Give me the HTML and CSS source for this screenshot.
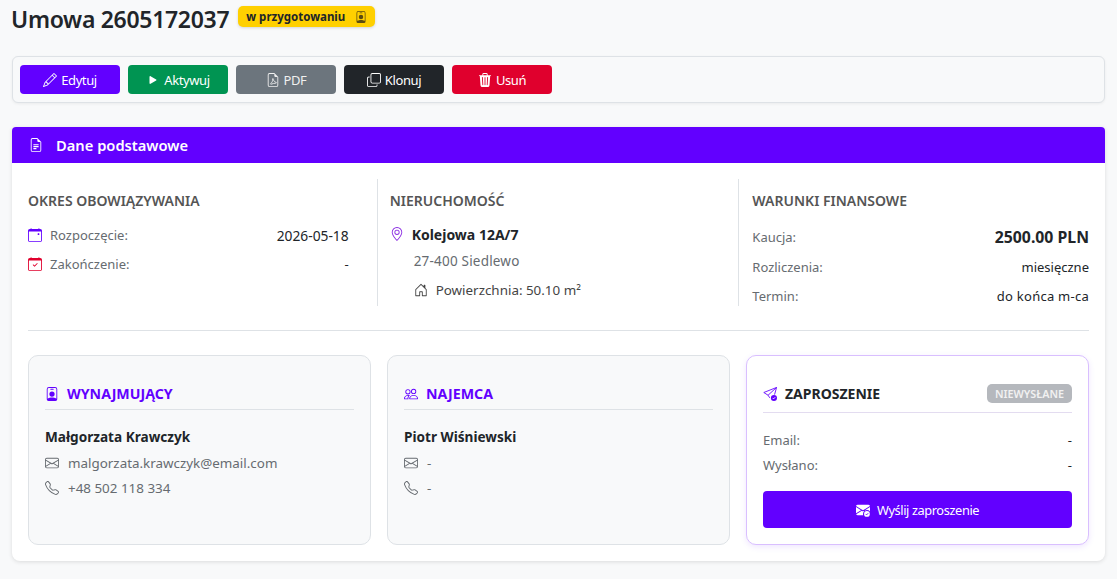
FILE: index.html
```html
<!DOCTYPE html>
<html lang="pl">

<head>
  <meta charset="UTF-8" />
  <title>Umowa 2605172037</title>
  <meta name="viewport" content="width=device-width, initial-scale=1.0" />
  <link rel="stylesheet" href="styles.css">
</head>

<body>
  <svg class="sprites" xmlns="http://www.w3.org/2000/svg">
    <symbol id="i-badge" viewBox="0 0 16 16"><path d="M6.5 2a.5.5 0 0 0 0 1h3a.5.5 0 0 0 0-1h-3zM11 8a3 3 0 1 1-6 0 3 3 0 0 1 6 0z"/><path d="M4.5 0A2.5 2.5 0 0 0 2 2.5V14a2 2 0 0 0 2 2h8a2 2 0 0 0 2-2V2.5A2.5 2.5 0 0 0 11.5 0h-7zM3 2.5A1.5 1.5 0 0 1 4.5 1h7A1.5 1.5 0 0 1 13 2.5v10.795a4.2 4.2 0 0 0-.776-.492C11.392 12.387 10.063 12 8 12s-3.392.387-4.224.803a4.2 4.2 0 0 0-.776.492V2.5z"/></symbol>
    <symbol id="i-envelope" viewBox="0 0 16 16"><path d="M0 4a2 2 0 0 1 2-2h12a2 2 0 0 1 2 2v8a2 2 0 0 1-2 2H2a2 2 0 0 1-2-2V4Zm2-1a1 1 0 0 0-1 1v.217l7 4.2 7-4.2V4a1 1 0 0 0-1-1H2Zm13 2.383-4.708 2.825L15 11.105V5.383Zm-.034 6.876-5.64-3.471L8 9.583l-1.326-.795-5.64 3.47A1 1 0 0 0 2 13h12a1 1 0 0 0 .966-.741ZM1 11.105l4.708-2.897L1 5.383v5.722Z"/></symbol>
    <symbol id="i-phone" viewBox="0 0 16 16"><path d="M3.654 1.328a.678.678 0 0 0-1.015-.063L1.605 2.3c-.483.484-.661 1.169-.45 1.77a17.568 17.568 0 0 0 4.168 6.608 17.569 17.569 0 0 0 6.608 4.168c.601.211 1.286.033 1.77-.45l1.034-1.034a.678.678 0 0 0-.063-1.015l-2.307-1.794a.678.678 0 0 0-.58-.122l-2.19.547a1.745 1.745 0 0 1-1.657-.459L5.482 8.062a1.745 1.745 0 0 1-.46-1.657l.548-2.19a.678.678 0 0 0-.122-.58L3.654 1.328zM1.884.511a1.745 1.745 0 0 1 2.612.163L6.29 2.98c.329.423.445.974.315 1.494l-.547 2.19a.678.678 0 0 0 .178.643l2.457 2.457a.678.678 0 0 0 .644.178l2.189-.547a1.745 1.745 0 0 1 1.494.315l2.306 1.794c.829.645.905 1.87.163 2.611l-1.034 1.034c-.74.74-1.846 1.065-2.877.702a18.634 18.634 0 0 1-7.01-4.42 18.634 18.634 0 0 1-4.42-7.009c-.362-1.03-.037-2.137.703-2.877L1.885.511z"/></symbol>
  </svg>

  <main>
    <header class="page-title">
      <h1>Umowa 2605172037</h1>
      <span class="status">w przygotowaniu <svg class="icon"><use href="#i-badge"/></svg></span>
    </header>

    <div class="toolbar">
      <button class="btn btn-primary">
        <svg class="icon" viewBox="0 0 16 16"><path d="M12.146.146a.5.5 0 0 1 .708 0l3 3a.5.5 0 0 1 0 .708l-10 10a.5.5 0 0 1-.168.11l-5 2a.5.5 0 0 1-.65-.65l2-5a.5.5 0 0 1 .11-.168l10-10zM11.207 2.5 13.5 4.793 14.793 3.5 12.5 1.207 11.207 2.5zm1.586 3L10.5 3.207 4 9.707V10h.5a.5.5 0 0 1 .5.5v.5h.5a.5.5 0 0 1 .5.5v.5h.293l6.5-6.5zm-9.761 5.175-.106.106-1.528 3.821 3.821-1.528.106-.106A.5.5 0 0 1 5 12.5V12h-.5a.5.5 0 0 1-.5-.5V11h-.5a.5.5 0 0 1-.468-.325z"/></svg>
        Edytuj
      </button>
      <button class="btn btn-success">
        <svg class="icon" viewBox="0 0 16 16"><path d="m11.596 8.697-6.363 3.692c-.54.313-1.233-.066-1.233-.697V4.308c0-.63.692-1.01 1.233-.696l6.363 3.692a.802.802 0 0 1 0 1.393z"/></svg>
        Aktywuj
      </button>
      <button class="btn btn-secondary">
        <svg class="icon" viewBox="0 0 16 16"><path d="M14 14V4.5L9.5 0H4a2 2 0 0 0-2 2v12a2 2 0 0 0 2 2h8a2 2 0 0 0 2-2zM9.5 3A1.5 1.5 0 0 0 11 4.5h2V14a1 1 0 0 1-1 1H4a1 1 0 0 1-1-1V2a1 1 0 0 1 1-1h5.5v2z"/><path d="M8 6.2c-.5 0-.6.7-.4 1.5.3 1.2-.7 3.2-1.9 4-.9.6-.5 1.4.3 1.1 1.2-.5 3.8-1.3 5.2-1.2.8 0 .9-.8.1-1-1.3-.3-2.6-1.7-3-3.3C8.2 7 8.4 6.2 8 6.2z" fill="none" stroke="currentColor" stroke-width="1"/></svg>
        PDF
      </button>
      <button class="btn btn-dark">
        <svg class="icon" viewBox="0 0 16 16"><path d="M4 2a2 2 0 0 1 2-2h8a2 2 0 0 1 2 2v8a2 2 0 0 1-2 2H6a2 2 0 0 1-2-2V2Zm2-1a1 1 0 0 0-1 1v8a1 1 0 0 0 1 1h8a1 1 0 0 0 1-1V2a1 1 0 0 0-1-1H6ZM2 5a1 1 0 0 0-1 1v8a1 1 0 0 0 1 1h8a1 1 0 0 0 1-1v-1h1v1a2 2 0 0 1-2 2H2a2 2 0 0 1-2-2V6a2 2 0 0 1 2-2h1v1H2Z"/></svg>
        Klonuj
      </button>
      <button class="btn btn-danger">
        <svg class="icon" viewBox="0 0 16 16"><path d="M11 1.5v1h3.5a.5.5 0 0 1 0 1h-.538l-.853 10.66A2 2 0 0 1 11.115 16h-6.23a2 2 0 0 1-1.994-1.84L2.038 3.5H1.5a.5.5 0 0 1 0-1H5v-1A1.5 1.5 0 0 1 6.5 0h3A1.5 1.5 0 0 1 11 1.5Zm-5 0v1h4v-1a.5.5 0 0 0-.5-.5h-3a.5.5 0 0 0-.5.5ZM4.5 5.029l.5 8.5a.5.5 0 1 0 .998-.06l-.5-8.5a.5.5 0 1 0-.998.06Zm6.53-.528a.5.5 0 0 0-.528.47l-.5 8.5a.5.5 0 0 0 .998.058l.5-8.5a.5.5 0 0 0-.47-.528ZM8 4.5a.5.5 0 0 0-.5.5v8.5a.5.5 0 0 0 1 0V5a.5.5 0 0 0-.5-.5Z"/></svg>
        Usuń
      </button>
    </div>

    <section class="panel">
      <header class="panel-title">
        <svg class="icon" viewBox="0 0 16 16"><path d="M5 7h6v1.4H5zM5 9.2h6v1.4H5zM5 11.4h3.5v1.4H5z"/><path d="M9.5 0H4a2 2 0 0 0-2 2v12a2 2 0 0 0 2 2h8a2 2 0 0 0 2-2V4.5L9.5 0zm0 1v2A1.5 1.5 0 0 0 11 4.5h2V14a1 1 0 0 1-1 1H4a1 1 0 0 1-1-1V2a1 1 0 0 1 1-1h5.5z"/></svg>
        Dane podstawowe
      </header>

      <div class="panel-body">
        <div class="columns">
          <div class="col col-term">
            <h3>OKRES OBOWIĄZYWANIA</h3>
            <div class="row">
              <span class="label">
                <svg class="icon icon-start" viewBox="0 0 16 16"><path d="M11 6.5a.5.5 0 0 1 .5-.5h1a.5.5 0 0 1 .5.5v1a.5.5 0 0 1-.5.5h-1a.5.5 0 0 1-.5-.5v-1z"/><path d="M3.5 0a.5.5 0 0 1 .5.5V1h8V.5a.5.5 0 0 1 1 0V1h1a2 2 0 0 1 2 2v11a2 2 0 0 1-2 2H2a2 2 0 0 1-2-2V3a2 2 0 0 1 2-2h1V.5a.5.5 0 0 1 .5-.5zM1 4v10a1 1 0 0 0 1 1h12a1 1 0 0 0 1-1V4H1z"/></svg>
                Rozpoczęcie:
              </span>
              <span class="value value-date">2026-05-18</span>
            </div>
            <div class="row">
              <span class="label">
                <svg class="icon icon-end" viewBox="0 0 16 16"><path d="M10.854 7.146a.5.5 0 0 1 0 .708l-3 3a.5.5 0 0 1-.708 0l-1.5-1.5a.5.5 0 1 1 .708-.708L7.5 9.793l2.646-2.647a.5.5 0 0 1 .708 0z"/><path d="M3.5 0a.5.5 0 0 1 .5.5V1h8V.5a.5.5 0 0 1 1 0V1h1a2 2 0 0 1 2 2v11a2 2 0 0 1-2 2H2a2 2 0 0 1-2-2V3a2 2 0 0 1 2-2h1V.5a.5.5 0 0 1 .5-.5zM1 4v10a1 1 0 0 0 1 1h12a1 1 0 0 0 1-1V4H1z"/></svg>
                Zakończenie:
              </span>
              <span class="value">-</span>
            </div>
          </div>

          <div class="col">
            <h3>NIERUCHOMOŚĆ</h3>
            <div class="address">
              <svg class="icon icon-pin" viewBox="0 0 16 16"><path d="M12.166 8.94c-.524 1.062-1.234 2.12-1.96 3.07A31.493 31.493 0 0 1 8 14.58a31.481 31.481 0 0 1-2.206-2.57c-.726-.95-1.436-2.008-1.96-3.07C3.304 7.867 3 6.862 3 6a5 5 0 0 1 10 0c0 .862-.305 1.867-.834 2.94zM8 16s6-5.686 6-10A6 6 0 0 0 2 6c0 4.314 6 10 6 10z"/><path d="M8 8a2 2 0 1 1 0-4 2 2 0 0 1 0 4zm0 1a3 3 0 1 0 0-6 3 3 0 0 0 0 6z"/></svg>
              Kolejowa 12A/7
            </div>
            <div class="city">27-400 Siedlewo</div>
            <div class="area">
              <svg class="icon" viewBox="0 0 16 16"><path d="M8.354 1.146a.5.5 0 0 0-.708 0l-6 6A.5.5 0 0 0 1.5 7.5v7a.5.5 0 0 0 .5.5h4.5a.5.5 0 0 0 .5-.5v-4h2v4a.5.5 0 0 0 .5.5H14a.5.5 0 0 0 .5-.5v-7a.5.5 0 0 0-.146-.354L13 5.793V2.5a.5.5 0 0 0-.5-.5h-1a.5.5 0 0 0-.5.5v1.293L8.354 1.146zM2.5 14V7.707l5.5-5.5 5.5 5.5V14H10v-4a.5.5 0 0 0-.5-.5h-3a.5.5 0 0 0-.5.5v4H2.5z"/></svg>
              Powierzchnia: 50.10 m²
            </div>
          </div>

          <div class="col col-last">
            <h3>WARUNKI FINANSOWE</h3>
            <div class="row row-money">
              <span class="label">Kaucja:</span>
              <span class="value value-big">2500.00 PLN</span>
            </div>
            <div class="row row-money">
              <span class="label">Rozliczenia:</span>
              <span class="value">miesięczne</span>
            </div>
            <div class="row row-money">
              <span class="label">Termin:</span>
              <span class="value value-wide">do końca m-ca</span>
            </div>
          </div>
        </div>

        <hr class="divider">

        <div class="cards">
          <div class="card">
            <h4 class="card-title">
              <svg class="icon"><use href="#i-badge"/></svg>
              WYNAJMUJĄCY
            </h4>
            <div class="person">Małgorzata Krawczyk</div>
            <div class="contact"><svg class="icon"><use href="#i-envelope"/></svg> malgorzata.krawczyk@email.com</div>
            <div class="contact"><svg class="icon"><use href="#i-phone"/></svg> +48 502 118 334</div>
          </div>

          <div class="card">
            <h4 class="card-title">
              <svg class="icon" viewBox="0 0 16 16"><path d="M15 14s1 0 1-1-1-4-5-4-5 3-5 4 1 1 1 1h8Zm-7.978-1A.261.261 0 0 1 7 12.996c.001-.264.167-1.03.76-1.72C8.312 10.629 9.282 10 11 10c1.717 0 2.687.63 3.24 1.276.593.69.758 1.457.76 1.72l-.008.002a.274.274 0 0 1-.014.002H7.022ZM11 7a2 2 0 1 0 0-4 2 2 0 0 0 0 4Zm3-2a3 3 0 1 1-6 0 3 3 0 0 1 6 0ZM6.936 9.28a5.88 5.88 0 0 0-1.23-.247A7.35 7.35 0 0 0 5 9c-4 0-5 3-5 4 0 .667.333 1 1 1h4.216A2.238 2.238 0 0 1 5 13c0-1.01.377-2.042 1.09-2.904.243-.294.526-.569.846-.816ZM4.92 10A5.493 5.493 0 0 0 4 13H1c0-.26.164-1.03.76-1.724.545-.636 1.492-1.256 3.16-1.275ZM1.5 5.5a3 3 0 1 1 6 0 3 3 0 0 1-6 0Zm3-2a2 2 0 1 0 0 4 2 2 0 0 0 0-4Z"/></svg>
              NAJEMCA
            </h4>
            <div class="person">Piotr Wiśniewski</div>
            <div class="contact"><svg class="icon"><use href="#i-envelope"/></svg> -</div>
            <div class="contact"><svg class="icon"><use href="#i-phone"/></svg> -</div>
          </div>

          <div class="card card-invite">
            <div class="invite-head">
              <h4 class="card-title">
                <svg class="icon" viewBox="0 0 16 16"><path d="M15.5.5.9 6.3l4.9 3.1 1.9 3M15.5.5 5.8 9.4M15.5.5l-2.300 8.200" fill="none" stroke="currentColor"/><circle cx="12.5" cy="12.5" r="3.5"/><path d="m11 12.5 1.1 1.1 1.9-2" fill="none" stroke="#fff"/></svg>
                ZAPROSZENIE
              </h4>
              <span class="pill">NIEWYSŁANE</span>
            </div>
            <div class="row row-invite">
              <span class="label">Email:</span>
              <span class="value">-</span>
            </div>
            <div class="row row-invite">
              <span class="label">Wysłano:</span>
              <span class="value">-</span>
            </div>
            <button class="btn btn-primary btn-wide">
              <svg class="icon" viewBox="0 0 16 16"><path d="M.05 3.555A2 2 0 0 1 2 2h12a2 2 0 0 1 1.95 1.555L8 8.414.05 3.555ZM0 4.697v7.104l5.803-3.558L0 4.697ZM6.761 8.83l-6.57 4.026A2 2 0 0 0 2 14h6.256A4.493 4.493 0 0 1 8 12.5a4.49 4.49 0 0 1 1.606-3.446l-.367-.225L8 9.586l-1.239-.757ZM16 4.697v4.974A4.491 4.491 0 0 0 12.5 8a4.49 4.49 0 0 0-1.965.45l-.338-.207L16 4.697Z"/><circle cx="12.5" cy="12.5" r="3.3"/><path d="m11 12.5 1.100 1.100 1.900-2" fill="none" stroke="#6200ff"/></svg>
              Wyślij zaproszenie
            </button>
          </div>
        </div>
      </div>
    </section>
  </main>
</body>

</html>
```
FILE: styles.css
```css
:root {
  --color-primary: #6200ff;
  --color-text: #212529;
  --color-muted: #666b70;
  --color-line: #dee2e6;
  --page-bg: #f8f9fa;
}

* {
  box-sizing: border-box;
}

html,
body {
  height: 100%;
}

body {
  margin: 0;
  background-color: var(--page-bg);
  color: var(--color-text);
  font-family: "Noto Sans", sans-serif;
  font-size: 14px;
  overflow: hidden;
}

.sprites {
  display: none;
}

.icon {
  width: 14px;
  height: 14px;
  flex: none;
  fill: currentColor;
}

main {
  padding: 5px 12px 0 12px;
}

/* title */
.page-title {
  display: flex;
  align-items: center;
  gap: 9px;
  height: 28px;
  margin: 0 0 23px -1px;
}

.page-title h1 {
  margin: 0;
  font-size: 23px;
  font-weight: 600;
  line-height: 28px;
  letter-spacing: -0.3px;
}

.status {
  display: flex;
  align-items: center;
  justify-content: space-between;
  width: 137px;
  height: 21px;
  margin-top: -5px;
  padding: 0 8px;
  background-color: #ffd000;
  border-radius: 5px;
  box-shadow: 0 1px 3px rgba(0, 0, 0, 0.15);
  font-size: 11.5px;
  font-weight: 700;
}

.status .icon {
  width: 12px;
  height: 12px;
  color: #5c4c10;
}

/* buttons */
.toolbar {
  display: flex;
  gap: 8px;
  height: 47px;
  margin-bottom: 24px;
  padding: 8px 8px 8px 7px;
  background-color: var(--page-bg);
  border: 1px solid var(--color-line);
  border-radius: 6px;
  box-shadow: 0 1px 3px rgba(0, 0, 0, 0.06);
}

.btn {
  display: flex;
  align-items: center;
  justify-content: center;
  gap: 4px;
  width: 100px;
  height: 29px;
  padding: 0;
  border: 0;
  border-radius: 4px;
  color: #fff;
  font-family: inherit;
  font-size: 13px;
  letter-spacing: -0.4px;
}

.btn-primary {
  background-color: var(--color-primary);
}

.btn-success {
  background-color: #009452;
}

.btn-secondary {
  background-color: #6c757d;
  color: #f0f0f0;
}

.btn-dark {
  background-color: #212529;
}

.btn-danger {
  background-color: #e0002d;
}

.btn-wide {
  width: 100%;
  height: 37px;
  gap: 7px;
  margin-top: 16px;
  font-size: 12.8px;
}

/* main panel */
.panel {
  height: 434px;
  background-color: #fff;
  border-radius: 4px 4px 8px 8px;
  box-shadow: 0 1px 4px rgba(0, 0, 0, 0.12);
  overflow: hidden;
}

.panel-title {
  display: flex;
  align-items: center;
  gap: 13px;
  height: 36px;
  padding: 0 17px;
  background-color: var(--color-primary);
  color: #fff;
  font-size: 14.7px;
  font-weight: 600;
}

.panel-body {
  padding: 16px;
}

.columns {
  display: grid;
  grid-template-columns: repeat(3, 1fr);
  grid-auto-rows: 127px;
  margin: 0 -12px;
}

.col {
  padding: 12px 12px 0 12px;
  border-right: 1px solid var(--color-line);
}

.col-term {
  padding-right: 28px;
}

.col-last {
  border-right: 0;
}

.col h3 {
  margin: 0 0 13px 0;
  color: #555;
  font-size: 14px;
  font-weight: 600;
  line-height: 20px;
}

.col-term h3 {
  margin-bottom: 14px;
}

.col-last h3 {
  margin-bottom: 16px;
  padding-left: 1px;
}

.row {
  display: flex;
  align-items: center;
  justify-content: space-between;
  height: 20px;
  margin-bottom: 9px;
  font-size: 13px;
}

.label {
  display: flex;
  align-items: center;
  gap: 8px;
  color: var(--color-muted);
}

.value-date {
  font-size: 13.8px;
}

.value-wide {
  letter-spacing: 0.25px;
}

.icon-start {
  color: var(--color-primary);
}

.icon-end {
  color: #e0002d;
}

.address {
  display: flex;
  align-items: center;
  gap: 8px;
  height: 20px;
  font-size: 14px;
  font-weight: 700;
}

.icon-pin {
  color: #8a2be2;
}

.city {
  margin: 7px 0 0 24px;
  color: var(--color-muted);
  font-size: 13.5px;
  letter-spacing: 0.2px;
  line-height: 20px;
}

.area {
  display: flex;
  align-items: center;
  gap: 8px;
  margin: 9px 0 0 24px;
  font-size: 13.4px;
  line-height: 20px;
  color: #444;
}

.row-money {
  padding-left: 1px;
  margin-bottom: 9.5px;
}

.value-big {
  font-size: 15.8px;
  font-weight: 700;
}

.divider {
  margin: 24px 0;
  border: 0;
  border-top: 1px solid var(--color-line);
}

/* people */
.cards {
  display: grid;
  grid-template-columns: repeat(3, 1fr);
  gap: 16px;
}

.card {
  height: 190px;
  padding: 28px 16px 16px 16px;
  background-color: var(--page-bg);
  border: 1px solid var(--color-line);
  border-radius: 10px;
  font-size: 13px;
}

.card-title {
  display: flex;
  align-items: center;
  gap: 8px;
  height: 26px;
  margin: 0 0 17px 0;
  border-bottom: 1px solid var(--color-line);
  padding-bottom: 6px;
  color: var(--color-primary);
  font-size: 14.2px;
  font-weight: 700;
}

.person {
  margin-bottom: 3px;
  font-size: 13.6px;
  font-weight: 700;
  line-height: 20px;
}

.contact {
  display: flex;
  align-items: center;
  gap: 9px;
  height: 25px;
  color: var(--color-muted);
  font-size: 13.4px;
}

.contact .icon {
  width: 14px;
  height: 14px;
}

.card-invite {
  background-color: #fff;
  border-color: #d9bfff;
  box-shadow: 0 2px 6px rgba(98, 0, 255, 0.1);
}

.invite-head {
  display: flex;
  align-items: center;
  justify-content: space-between;
  height: 29px;
  margin-bottom: 17px;
  padding-bottom: 9px;
  border-bottom: 1px solid #e3dcf0;
}

.invite-head .card-title {
  height: auto;
  margin: 0;
  padding: 0;
  border: 0;
  color: var(--color-text);
  font-size: 14px;
}

.invite-head .card-title .icon {
  color: var(--color-primary);
}

.pill {
  display: flex;
  align-items: center;
  height: 19px;
  padding: 0 8px;
  background-color: #b5b8bd;
  border-radius: 5px;
  color: #f1f1f1;
  font-size: 10.8px;
  font-weight: 600;
}

.row-invite {
  margin-bottom: 5px;
}
```
